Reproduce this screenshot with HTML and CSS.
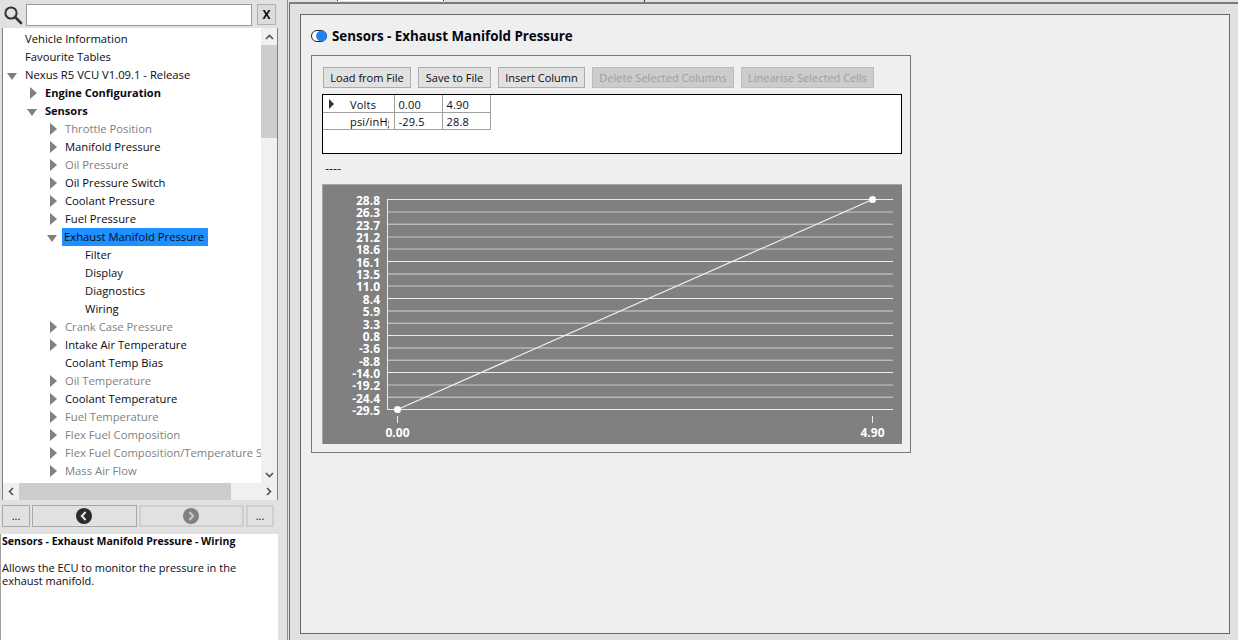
FILE: index.html
```html
<!DOCTYPE html>
<html lang="en">
<head>
<meta charset="utf-8">
<title>Sensors - Exhaust Manifold Pressure</title>
<link rel="stylesheet" href="styles.css">
</head>
<body>
<div class="app">
  <aside class="side">
    <div class="search">
      <svg class="lens" width="20" height="20" viewBox="0 0 20 20"><circle cx="8" cy="8" r="5.6" fill="none" stroke="#333" stroke-width="2"/><path d="M12 12l6 6" stroke="#333" stroke-width="2.6" stroke-linecap="round"/></svg>
      <div class="search-input"></div>
      <div class="x-btn">X</div>
    </div>
    <div class="tree-box">
      <div class="tree">
        <div class="row d0"><span class="tw"></span><span>Vehicle Information</span></div>
        <div class="row d0"><span class="tw"></span><span>Favourite Tables</span></div>
        <div class="row d0"><span class="tw down"></span><span>Nexus R5 VCU V1.09.1 - Release</span></div>
        <div class="row d1 bold"><span class="tw right"></span><span>Engine Configuration</span></div>
        <div class="row d1 bold"><span class="tw down"></span><span>Sensors</span></div>
        <div class="row d2 off"><span class="tw right"></span><span>Throttle Position</span></div>
        <div class="row d2"><span class="tw right"></span><span>Manifold Pressure</span></div>
        <div class="row d2 off"><span class="tw right"></span><span>Oil Pressure</span></div>
        <div class="row d2"><span class="tw right"></span><span>Oil Pressure Switch</span></div>
        <div class="row d2"><span class="tw right"></span><span>Coolant Pressure</span></div>
        <div class="row d2"><span class="tw right"></span><span>Fuel Pressure</span></div>
        <div class="row d2"><span class="tw down"></span><span class="sel">Exhaust Manifold Pressure</span></div>
        <div class="row d3"><span class="tw"></span><span>Filter</span></div>
        <div class="row d3"><span class="tw"></span><span>Display</span></div>
        <div class="row d3"><span class="tw"></span><span>Diagnostics</span></div>
        <div class="row d3"><span class="tw"></span><span>Wiring</span></div>
        <div class="row d2 off"><span class="tw right"></span><span>Crank Case Pressure</span></div>
        <div class="row d2"><span class="tw right"></span><span>Intake Air Temperature</span></div>
        <div class="row d2"><span class="tw"></span><span>Coolant Temp Bias</span></div>
        <div class="row d2 off"><span class="tw right"></span><span>Oil Temperature</span></div>
        <div class="row d2"><span class="tw right"></span><span>Coolant Temperature</span></div>
        <div class="row d2 off"><span class="tw right"></span><span>Fuel Temperature</span></div>
        <div class="row d2 off"><span class="tw right"></span><span>Flex Fuel Composition</span></div>
        <div class="row d2 off"><span class="tw right"></span><span>Flex Fuel Composition/Temperature Sensor</span></div>
        <div class="row d2 off"><span class="tw right"></span><span>Mass Air Flow</span></div>
      </div>
      <div class="vbar">
        <div class="sb-btn"><svg width="9" height="6" viewBox="0 0 9 6"><path d="M1 5l3.5-3.5L8 5" fill="none" stroke="#505050" stroke-width="1.6"/></svg></div>
        <div class="v-thumb"></div>
        <div class="sb-fill"></div>
        <div class="sb-btn"><svg width="9" height="6" viewBox="0 0 9 6"><path d="M1 1l3.5 3.5L8 1" fill="none" stroke="#505050" stroke-width="1.6"/></svg></div>
      </div>
      <div class="hbar">
        <div class="sb-btn"><svg width="6" height="9" viewBox="0 0 6 9"><path d="M5 1L1.5 4.5 5 8" fill="none" stroke="#505050" stroke-width="1.6"/></svg></div>
        <div class="h-thumb"></div>
        <div class="sb-fill"></div>
        <div class="sb-btn"><svg width="6" height="9" viewBox="0 0 6 9"><path d="M1 1l3.5 3.5L1 8" fill="none" stroke="#505050" stroke-width="1.6"/></svg></div>
      </div>
    </div>
    <div class="nav">
      <div class="nav-btn small"><span>...</span></div>
      <div class="nav-btn wide"><svg width="16" height="16" viewBox="0 0 16 16"><circle cx="8" cy="8" r="8" fill="#2b2b2b"/><path d="M9.6 4L5.8 8l3.8 4" fill="none" stroke="#e8e8e8" stroke-width="2"/></svg></div>
      <div class="nav-btn wide dis"><svg width="16" height="16" viewBox="0 0 16 16"><circle cx="8" cy="8" r="8" fill="#808080"/><path d="M6.4 4l3.8 4-3.8 4" fill="none" stroke="#c8c8c8" stroke-width="2"/></svg></div>
      <div class="nav-btn small dis"><span>...</span></div>
    </div>
    <div class="desc">
      <p class="desc-title">Sensors - Exhaust Manifold Pressure - Wiring</p>
      <p>Allows the ECU to monitor the pressure in the exhaust manifold.</p>
    </div>
  </aside>
  <div class="splitter"></div>
  <main class="main">
    <div class="tabs"><span class="tab"></span><span class="tick"></span></div>
    <div class="pane">
      <section class="panel">
        <h1 class="title">
          <svg width="17" height="14" viewBox="0 0 17 14"><rect x="0.5" y="1.5" width="15" height="11" rx="5.5" fill="#fff" stroke="#222"/><circle cx="10.5" cy="7" r="5.4" fill="#1e82f0"/></svg>
          <span>Sensors - Exhaust Manifold Pressure</span>
        </h1>
        <div class="editor">
          <div class="toolbar">
            <button class="btn w1">Load from File</button>
            <button class="btn w2">Save to File</button>
            <button class="btn w3">Insert Column</button>
            <button class="btn w4" disabled>Delete Selected Columns</button>
            <button class="btn w5" disabled>Linearise Selected Cells</button>
          </div>
          <div class="grid-frame">
            <table class="grid">
              <tr><th class="head-top"><i class="row-arrow"></i><span>Volts</span></th><td>0.00</td><td>4.90</td></tr>
              <tr><th><span>psi/inHg</span></th><td>-29.5</td><td>28.8</td></tr>
            </table>
          </div>
          <div class="status">----</div>
          <svg class="chart" width="580" height="260" viewBox="322 184 580 260">
            <rect x="322" y="184" width="580" height="260" fill="#808080"/>
            <path d="M322 184.5H902M322.5 184V444" stroke="#a8a8a8" fill="none"/>
            <g class="gl">
              <path class="c" d="M387 199.5H893"/>
              <path class="b" d="M387 212H893"/>
              <path class="m" d="M387 224.2H893"/>
              <path class="b" d="M387 237H893"/>
              <path class="b" d="M387 249H893"/>
              <path class="c" d="M387 261.5H893"/>
              <path class="m" d="M387 274H893"/>
              <path class="b" d="M387 286H893"/>
              <path class="c" d="M387 298.5H893"/>
              <path class="m" d="M387 311H893"/>
              <path class="m" d="M387 323.2H893"/>
              <path class="c" d="M387 335.5H893"/>
              <path class="m" d="M387 348H893"/>
              <path class="m" d="M387 360.2H893"/>
              <path class="c" d="M387 372.5H893"/>
              <path class="b" d="M387 385H893"/>
              <path class="m" d="M387 397.2H893"/>
              <path class="c" d="M387 409.5H893"/>
              <path class="c" d="M387.5 199V410"/>
              <path class="c" d="M397.5 416V423M872.5 416V423"/>
            </g>
            <path class="curve" d="M397.5 409.5L872.5 199.5"/>
            <circle class="pt" cx="397.5" cy="409.5" r="3.5"/>
            <circle class="pt" cx="872.5" cy="199.5" r="3.5"/>
            <g class="yl">
              <text x="380" y="205">28.8</text>
              <text x="380" y="217">26.3</text>
              <text x="380" y="230">23.7</text>
              <text x="380" y="242">21.2</text>
              <text x="380" y="254">18.6</text>
              <text x="380" y="267">16.1</text>
              <text x="380" y="279">13.5</text>
              <text x="380" y="291">11.0</text>
              <text x="380" y="304">8.4</text>
              <text x="380" y="316">5.9</text>
              <text x="380" y="329">3.3</text>
              <text x="380" y="341">0.8</text>
              <text x="380" y="353">-3.6</text>
              <text x="380" y="366">-8.8</text>
              <text x="380" y="378">-14.0</text>
              <text x="380" y="390">-19.2</text>
              <text x="380" y="403">-24.4</text>
              <text x="380" y="415">-29.5</text>
            </g>
            <g class="xl">
              <text x="397.5" y="437">0.00</text>
              <text x="872.5" y="437">4.90</text>
            </g>
          </svg>
        </div>
      </section>
    </div>
  </main>
</div>
</body>
</html>
```

FILE: styles.css
```css
* { box-sizing: border-box; }
html, body { margin: 0; height: 100%; }
body {
  background: #e1e1e1;
  color: #0a0a14;
  font-family: "Open Sans", "Noto Sans", sans-serif;
  font-size: 12px;
  overflow: hidden;
}
.app { display: flex; width: 1238px; height: 640px; }

/* left column */
.side { width: 278px; flex: none; display: flex; flex-direction: column; height: 640px; }
.search { height: 28px; display: flex; align-items: flex-start; padding-top: 4px; }
.lens { margin: 1px 0 0 3px; flex: none; }
.search-input { width: 226px; height: 22px; margin-left: 3px; background: #fff; border: 1px solid #9a9a9a; }
.x-btn {
  width: 19px; height: 21px; margin-left: 5px;
  background: #dcdcdc; border: 1px solid #b0b0b0;
  font-weight: 700; font-size: 12px; line-height: 19px; text-align: center;
}
.tree-box {
  margin-left: 2px; width: 276px; height: 472px;
  display: grid; grid-template-columns: 258px 16px; grid-template-rows: 453px 17px;
  border-left: 1px solid #808080; border-right: 1px solid #808080; border-bottom: 2px solid #6e6e6e;
  background: #fff; padding-top: 2px;
}
.tree { overflow: hidden; background: #fff; font-size: 11.25px; }
.row { display: flex; align-items: center; height: 18px; white-space: nowrap; }
.row > span:last-child { padding: 0 2px; line-height: 18px; }
.d0 { padding-left: 3px; }
.d1 { padding-left: 23px; }
.d2 { padding-left: 43px; }
.d3 { padding-left: 63px; }
.tw { width: 17px; height: 18px; flex: none; display: flex; align-items: center; justify-content: center; }
.tw.right::before { content: ""; border-left: 7px solid #808080; border-top: 6px solid transparent; border-bottom: 6px solid transparent; margin-left: -2px; }
.tw.down::before { content: ""; border-top: 7px solid #808080; border-left: 5px solid transparent; border-right: 5px solid transparent; margin-top: 3px; margin-left: -5px; }
.bold { font-weight: 700; font-size: 11.05px; }
.off { color: #808080; }
.row > .sel { background: #1e90ff; width: 146px; flex: none; margin-left: -1px; padding-left: 3px; }

.vbar { background: #f0f0f0; display: flex; flex-direction: column; grid-row: 1; grid-column: 2; margin-top: -2px; height: 455px; }
.hbar { background: #f0f0f0; display: flex; grid-column: 1 / span 2; grid-row: 2; }
.sb-btn { flex: none; width: 16px; height: 17px; display: flex; align-items: center; justify-content: center; }
.sb-fill { flex: 1; }
.v-thumb { height: 93px; background: #cdcdcd; flex: none; }
.h-thumb { width: 212px; background: #cdcdcd; flex: none; }

.nav { height: 22px; margin-top: 5px; padding-left: 2px; display: flex; gap: 2px; flex: none; }
.nav-btn { background: #e1e1e1; border: 1px solid #a8a8a8; display: flex; align-items: center; justify-content: center; font-size: 11px; }
.nav-btn.small { width: 28px; }
.nav-btn.wide { width: 105px; padding-right: 1px; }
.nav-btn.dis { border: 2px solid #cfcfcf; }
.nav-btn span { line-height: 14px; }

.desc {
  flex: 1; margin-top: 7px; background: #fff; padding: 1px 2px 0 1px;
  border-left: 1px solid #a0a0a0; font-size: 11px; line-height: 13px;
}
.desc p { margin: 0 0 13px; width: 250px; }
.desc-title { font-weight: 700; white-space: nowrap; font-size: 10.55px; }

/* right */
.splitter { width: 9px; flex: none; }
.main { flex: 1; border-left: 1px solid #8a8a8a; padding-left: 1px; display: flex; flex-direction: column; }
.tabs { height: 4px; flex: none; border-bottom: 1px solid #777; position: relative; display: flex; }
.tabs::before { content: ""; height: 2px; flex: 1 0 0; position: absolute; left: 0; right: 0; border-bottom: 1px solid #808080; }
.tab { width: 107px; height: 1px; margin-left: 48px; background: #fff; border-left: 1px solid #333; border-right: 1px solid #333; z-index: 1; }
.tick { width: 1px; height: 2px; margin-left: 200px; background: #333; z-index: 1; }
.pane { flex: 1; border-left: 1px solid #6e6e6e; padding: 10px 8px 6px 10px; }
.panel { height: 620px; background: #efefef; border: 1px solid #666; padding: 14px 0 0 10px; }
.title {
  margin: 0 0 12px; height: 14px; display: flex; align-items: center; gap: 4px;
  font-size: 13.35px; font-weight: 700; color: #05050f; white-space: nowrap;
}
.editor { width: 600px; height: 398px; border: 1px solid #777; padding: 11px 0 0 10px; }
.toolbar { display: flex; height: 21px; padding-left: 1px; gap: 7px; }
.btn {
  height: 21px; padding: 0; background: #e1e1e1; border: 1px solid #adadad;
  font: 11px "Open Sans", sans-serif; color: #0a0a14;
}
.btn:disabled { background: #cccccc; border-color: #bdbdbd; color: #9c9c9c; }
.w1 { width: 88px; } .w2 { width: 73px; } .w3 { width: 87px; } .w4 { width: 142px; } .w5 { width: 133px; }
.grid-frame { width: 580px; height: 60px; margin-top: 6px; background: #fff; border: 1px solid #000; }
.grid { border-collapse: collapse; table-layout: fixed; width: 167px; font-size: 11px; letter-spacing: 0.2px; }
.grid th, .grid td { height: 17px; padding: 1px 0 0; border: 1px solid #a0a0a0; overflow: hidden; white-space: nowrap; font-weight: 400; line-height: 15px; }
.grid tr:first-child th, .grid tr:first-child td { border-top: 0; padding-top: 2px; }
.grid th:first-child { border-left: 0; }
.grid th { width: 71px; text-align: left; position: relative; }
.grid th span { display: block; width: 39px; margin-left: 27px; overflow: hidden; }
.grid td { width: 48px; padding-left: 4px; }
.row-arrow { position: absolute; left: 6px; top: 4px; border-left: 5px solid #333; border-top: 5px solid transparent; border-bottom: 5px solid transparent; }
.status { height: 30px; padding: 8px 0 0 3px; font-size: 12.5px; line-height: 14px; color: #0018b0; }
.chart { display: block; }
.gl path { fill: none; stroke: #ececec; stroke-width: 1; }
.gl .m { stroke: #d4d4d4; }
.gl .b { stroke: #c8c8c8; }
.curve { fill: none; stroke: #f0f0f0; stroke-width: 1.2; }
.pt { fill: #fff; }
.chart text { font-family: "Open Sans", sans-serif; font-weight: 700; font-size: 12px; fill: #fff; }
.yl text { text-anchor: end; }
.xl text { text-anchor: middle; }
```
